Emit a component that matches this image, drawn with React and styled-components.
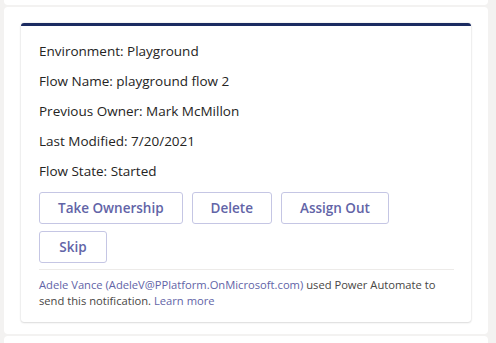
import styled, { createGlobalStyle } from "styled-components"

const GlobalStyle = createGlobalStyle`
    html, body {
        margin: 0;
        padding: 0;
        background: #f3f2f1;
        font-family: "Open Sans", "Noto Sans", sans-serif;
    }
`

const facts = [
    "Environment: Playground",
    "Flow Name: playground flow 2",
    "Previous Owner: Mark McMillon",
    "Last Modified: 7/20/2021",
    "Flow State: Started",
]

const actions = ["Take Ownership", "Delete", "Assign Out", "Skip"]

export default function App() {
    return (
        <>
            <GlobalStyle />
            <Page>
                <PrevMessage />
                <Message>
                    <Card>
                        <Facts>
                            {facts.map((fact) => (
                                <Fact key={fact}>{fact}</Fact>
                            ))}
                        </Facts>
                        <Actions>
                            {actions.map((action) => (
                                <ActionButton key={action}>{action}</ActionButton>
                            ))}
                        </Actions>
                        <Footer>
                            <FooterLine>
                                <Link>Adele Vance (AdeleV@PPlatform.OnMicrosoft.com)</Link> used Power Automate to
                            </FooterLine>
                            <FooterLine>
                                send this notification. <Link>Learn more</Link>
                            </FooterLine>
                        </Footer>
                    </Card>
                </Message>
                <NextMessage />
            </Page>
        </>
    )
}

const Page = styled.div`
    width: 496px;
    height: 343px;
    overflow: hidden;
    display: flex;
    flex-direction: column;
    gap: 2px;
    padding: 0 8px 0 4px;
    box-sizing: border-box;
`

const PrevMessage = styled.div`
    flex: 0 0 5px;
    background: #ffffff;
    border-radius: 0 0 4px 4px;
`

const Message = styled.div`
    flex: 0 0 auto;
    background: #ffffff;
    border-radius: 4px;
    padding: 16px 17px 12px 17px;
`

const NextMessage = styled.div`
    flex: 0 0 20px;
    background: #ffffff;
    border-radius: 4px;
`

const Card = styled.div`
    border-top: 3px solid #1b2b61;
    border-radius: 3px;
    box-shadow: 0 0 2px rgba(0, 0, 0, 0.16), 0 1px 2px rgba(0, 0, 0, 0.1);
    padding: 15px 17px 13px 18px;
`

const Facts = styled.div`
    display: flex;
    flex-direction: column;
    gap: 10px;
`

const Fact = styled.div`
    font-size: 13.5px;
    line-height: 20px;
    color: #252423;
`

const Actions = styled.div`
    display: flex;
    flex-wrap: wrap;
    gap: 7px 9px;
    margin-top: 11px;
`

const ActionButton = styled.button`
    height: 32px;
    padding: 0 18px;
    min-width: 68px;
    border: 1px solid #c5c6e4;
    border-radius: 3px;
    background: #ffffff;
    color: #6264a7;
    font-family: "Open Sans", "Noto Sans", sans-serif;
    font-size: 13.5px;
    font-weight: 600;
`

const Footer = styled.div`
    margin-top: 6px;
    border-top: 1px solid #edebe9;
    padding-top: 7px;
    font-size: 11.2px;
    line-height: 16px;
    color: #484644;
`

const FooterLine = styled.div`
    white-space: nowrap;
`

const Link = styled.span`
    color: #6264a7;
`
